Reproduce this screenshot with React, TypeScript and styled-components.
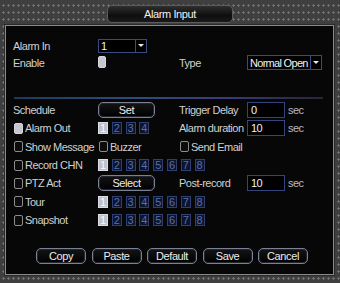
import React from 'react';
import styled, { createGlobalStyle } from 'styled-components';

const GlobalStyle = createGlobalStyle`
  body {
    margin: 0;
    background: #404040;
    font-family: "Liberation Sans", Arial, sans-serif;
  }
`;

const Frame = styled.div`
  width: 340px;
  height: 283px;
  box-sizing: border-box;
  display: flex;
  flex-direction: column;
  background-color: #3f3f3f;
  background-image: radial-gradient(circle, #777 0.9px, transparent 1.3px);
  background-size: 5px 7px;
  background-position: 1px 2px;
`;

const TitleBar = styled.div`
  height: 25px;
  display: flex;
  justify-content: center;
  align-items: flex-start;
  padding-top: 5px;
  box-sizing: border-box;
`;

const TitlePill = styled.div`
  width: 126px;
  height: 18px;
  box-sizing: border-box;
  border-radius: 5px;
  border: 1px solid #5c5c5c;
  background: linear-gradient(#2e2e2e, #0e0e0e 60%, #1a1a1a);
  color: #f0f0f0;
  font-size: 11px;
  letter-spacing: -0.4px;
  display: flex;
  align-items: center;
  justify-content: center;
`;

const Panel = styled.div`
  flex: 1;
  margin: 0 6px 8px 5px;
  border: 1px solid #8a8a8a;
  box-shadow: 0 0 0 1px #2a2a2a;
  background: #070707;
  padding: 11px 0 0 7px;
  color: #d0d0d0;
  font-size: 11px;
  letter-spacing: -0.5px;
`;

const TopGrid = styled.div`
  display: grid;
  grid-template-columns: 85px 81px 68px 1fr;
  grid-auto-rows: 17px;
  align-items: center;
`;

const FormGrid = styled.div`
  display: grid;
  grid-template-columns: 85px 81px 68px 1fr;
  grid-auto-rows: 18.33px;
  align-items: center;
`;

const Label = styled.span`
  white-space: nowrap;
`;

const Separator = styled.div`
  height: 2px;
  margin: 26px 10px 2px 1px;
  background: linear-gradient(to right, #1d3a5c, #2d4c7c 40%, #3a3a78 70%, #262636);
`;

const Dropdown = styled.div<{ $w: number; $h: number }>`
  width: ${p => p.$w}px;
  height: ${p => p.$h}px;
  box-sizing: border-box;
  border: 1px solid #3a4a82;
  background: #000;
  color: #f2f2f2;
  display: flex;
  align-items: center;
`;

const DropValue = styled.span`
  flex: 1;
  padding-left: 2px;
  white-space: nowrap;
  letter-spacing: -0.7px;
`;

const DropArrow = styled.span`
  width: 10px;
  align-self: stretch;
  border-left: 1px solid #3a4a82;
  display: flex;
  align-items: center;
  justify-content: center;
  &::after {
    content: '';
    border-left: 3px solid transparent;
    border-right: 3px solid transparent;
    border-top: 3px solid #e8e8e8;
  }
`;

const Check = styled.span<{ $on?: boolean; $w?: number; $h?: number }>`
  display: inline-block;
  width: ${p => p.$w ?? 9}px;
  height: ${p => p.$h ?? 11}px;
  box-sizing: border-box;
  border-radius: 2px;
  border: 1px solid ${p => (p.$on ? '#d4d6dc' : '#8c8c8c')};
  background: ${p => (p.$on ? '#c4c7cf' : '#0c0c0c')};
  flex-shrink: 0;
`;

const CheckLabel = styled.label<{ $span?: number }>`
  display: flex;
  align-items: center;
  gap: 2px;
  white-space: nowrap;
  margin-left: 1px;
  grid-column: ${p => (p.$span ? `span ${p.$span}` : 'auto')};
`;

const PillButton = styled.button<{ $w: number }>`
  width: ${p => p.$w}px;
  height: 16px;
  padding: 0;
  box-sizing: border-box;
  border-radius: 5px;
  border: 1px solid #7a8096;
  box-shadow: inset 0 0 0 1px #22252e;
  background: linear-gradient(#141414, #000);
  color: #ececec;
  font-family: inherit;
  font-size: 11px;
  letter-spacing: -0.4px;
  cursor: pointer;
`;

const NumberRow = styled.div<{ $span?: number }>`
  grid-column: span ${p => p.$span ?? 2};
  display: flex;
  gap: 3.8px;
`;

const NumBox = styled.span<{ $on?: boolean }>`
  width: 10px;
  height: 12px;
  box-sizing: border-box;
  border: 1px solid ${p => (p.$on ? '#dcdee4' : '#2f3f72')};
  background: ${p => (p.$on ? '#bfc2cb' : '#0b1431')};
  color: ${p => (p.$on ? '#f8f8f8' : '#5c6ea2')};
  font-size: 11px;
  letter-spacing: 0;
  line-height: 10px;
  text-align: center;
`;

const InputCell = styled.div`
  display: flex;
  align-items: center;
  gap: 3px;
`;

const ValueBox = styled.div`
  width: 38px;
  height: 16px;
  box-sizing: border-box;
  border: 1px solid #34457e;
  background: #000;
  color: #f2f2f2;
  padding-left: 3px;
  line-height: 14px;
`;

const Unit = styled.span`
  color: #b8b8c4;
`;

const ButtonBar = styled.div`
  display: flex;
  gap: 5.5px;
  margin-top: 18.5px;
  padding-left: 23px;
`;

const Numbers = ({ count, span }: { count: number; span?: number }) => (
  <NumberRow $span={span}>
    {Array.from({ length: count }, (_, i) => (
      <NumBox key={i} $on={i === 0}>{i + 1}</NumBox>
    ))}
  </NumberRow>
);

const Seconds = ({ value }: { value: string }) => (
  <InputCell>
    <ValueBox>{value}</ValueBox>
    <Unit>sec</Unit>
  </InputCell>
);

export default function App() {
  return (
    <>
      <GlobalStyle />
      <Frame>
        <TitleBar>
          <TitlePill>Alarm Input</TitlePill>
        </TitleBar>
        <Panel>
          <TopGrid>
            <Label>Alarm In</Label>
            <Dropdown $w={49} $h={14}>
              <DropValue>1</DropValue>
              <DropArrow />
            </Dropdown>
            <span />
            <span />
            <Label>Enable</Label>
            <div><Check $on $w={8} $h={12} /></div>
            <Label>Type</Label>
            <Dropdown $w={75} $h={15}>
              <DropValue>Normal Open</DropValue>
              <DropArrow />
            </Dropdown>
          </TopGrid>

          <Separator />

          <FormGrid>
            <Label>Schedule</Label>
            <PillButton $w={57}>Set</PillButton>
            <Label>Trigger Delay</Label>
            <Seconds value="0" />

            <CheckLabel><Check $on />Alarm Out</CheckLabel>
            <Numbers count={4} span={1} />
            <Label>Alarm duration</Label>
            <Seconds value="10" />

            <CheckLabel><Check />Show Message</CheckLabel>
            <CheckLabel><Check />Buzzer</CheckLabel>
            <CheckLabel $span={2}><Check />Send Email</CheckLabel>

            <CheckLabel><Check />Record CHN</CheckLabel>
            <Numbers count={8} />
            <span />

            <CheckLabel><Check />PTZ Act</CheckLabel>
            <PillButton $w={57}>Select</PillButton>
            <Label>Post-record</Label>
            <Seconds value="10" />

            <CheckLabel><Check />Tour</CheckLabel>
            <Numbers count={8} />
            <span />

            <CheckLabel><Check />Snapshot</CheckLabel>
            <Numbers count={8} />
            <span />
          </FormGrid>

          <ButtonBar>
            <PillButton $w={50}>Copy</PillButton>
            <PillButton $w={50}>Paste</PillButton>
            <PillButton $w={50}>Default</PillButton>
            <PillButton $w={50}>Save</PillButton>
            <PillButton $w={50}>Cancel</PillButton>
          </ButtonBar>
        </Panel>
      </Frame>
    </>
  );
}
